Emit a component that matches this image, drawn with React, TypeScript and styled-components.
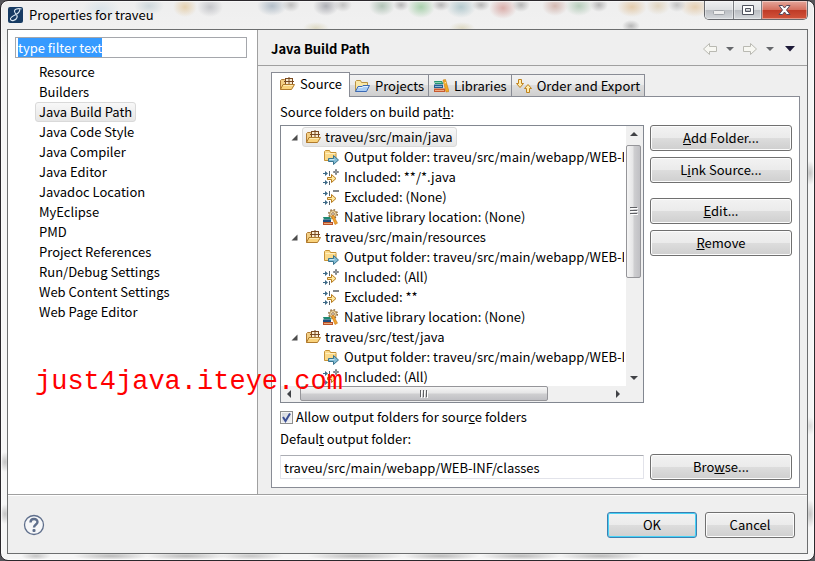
import React, { useEffect, useRef } from "react";
import styled, { createGlobalStyle, css } from "styled-components";

const GlobalStyle = createGlobalStyle`
  *, *::before, *::after { box-sizing: border-box; }
  body {
    margin: 0;
    background: #55555a;
    color: #000;
    font-family: "Noto Sans CJK SC", "Open Sans", sans-serif;
    font-size: 13px;
    line-height: 20px;
  }
  button, input { font: inherit; color: inherit; }
  ul { list-style: none; margin: 0; padding: 0; }
  svg { display: block; flex: none; }
`;

const smudge = (x: string, y: string, w: number, h: number, color: string) =>
  `radial-gradient(${w + 3}px ${h + 2}px at ${x} ${y}, color-mix(in srgb, ${color} 65%, transparent), transparent)`;

const glass = [
  smudge("100px", "8px", 16, 9, "#cfdde6"),
  smudge("148px", "5px", 12, 7, "#bccbd2"),
  smudge("184px", "6px", 9, 8, "#e0c08c"),
  smudge("209px", "6px", 10, 8, "#aeb0b6"),
  smudge("271px", "5px", 12, 8, "#92a4b4"),
  smudge("290px", "4px", 6, 5, "#a5a5a5"),
  smudge("325px", "5px", 10, 8, "#8b8d96"),
  smudge("342px", "4px", 6, 5, "#aaa"),
  smudge("381px", "5px", 10, 8, "#8fac98"),
  smudge("400px", "4px", 5, 4, "#999"),
  smudge("420px", "6px", 11, 9, "#83c189"),
  smudge("440px", "4px", 6, 4, "#999"),
  smudge("460px", "6px", 12, 9, "#94b6bd"),
  smudge("480px", "4px", 6, 4, "#999"),
  smudge("502px", "7px", 11, 9, "#cf8b85"),
  smudge("520px", "4px", 6, 5, "#999"),
  smudge("554px", "5px", 10, 8, "#c69b90"),
  smudge("578px", "5px", 11, 8, "#98bca0"),
  smudge("598px", "4px", 6, 5, "#999"),
  smudge("631px", "6px", 12, 8, "#ddb887"),
  smudge("657px", "5px", 9, 7, "#d9c6a4"),
  smudge("676px", "4px", 6, 5, "#aaa"),
  smudge("694px", "6px", 12, 8, "#e0bd90"),
  smudge("315px", "27px", 10, 4, "#d6cfae"),
  smudge("461px", "27px", 10, 4, "#d6cfae"),
  smudge("630px", "25px", 6, 4, "#999"),
  smudge("4px", "461px", 3, 8, "#aaa"),
  smudge("4px", "513px", 3, 8, "#aaa"),
  smudge("calc(100% - 4px)", "172px", 3, 10, "#aaa"),
  smudge("calc(100% - 4px)", "513px", 3, 12, "#aaa"),
  smudge("calc(100% - 4px)", "425px", 3, 7, "#ccc"),
  smudge("35px", "calc(100% - 4px)", 12, 2, "#aaa"),
  smudge("110px", "calc(100% - 4px)", 35, 2, "#999"),
  smudge("185px", "calc(100% - 4px)", 38, 2, "#999"),
  smudge("250px", "calc(100% - 4px)", 30, 2, "#aaa"),
  smudge("355px", "calc(100% - 4px)", 46, 2, "#999"),
  smudge("440px", "calc(100% - 4px)", 36, 2, "#999"),
  smudge("520px", "calc(100% - 4px)", 38, 2, "#999"),
  smudge("600px", "calc(100% - 4px)", 40, 2, "#999"),
].join(",");

const Frame = styled.div`
  position: relative;
  display: flex;
  flex-direction: column;
  min-height: 100vh;
  padding: 0 6px 6px;
  border: 1px solid #2b282c;
  border-radius: 8px;
  background: ${glass}, linear-gradient(#eee 0, #f1f1f1 28px, #f6f6f6 60px);
  box-shadow: inset 0 0 0 1px #ffffff99;
`;

const TitleBar = styled.header`
  display: flex;
  align-items: flex-start;
  height: 28px;
`;

const Caption = styled.div`
  display: flex;
  flex: 1;
  align-items: center;
  gap: 6px;
  height: 28px;
`;

const WindowButtons = styled.div`
  display: flex;
  border: 1px solid #66686d;
  border-top: 0;
  border-radius: 0 0 5px 5px;
  overflow: hidden;
`;

const WindowButton = styled.button<{ $close?: boolean }>`
  display: flex;
  align-items: center;
  justify-content: center;
  width: ${(p) => (p.$close ? 46 : 28)}px;
  height: 18px;
  padding: 0;
  border: 0;
  border-left: ${(p) => (p.$close ? "1px solid #6b3030" : "0")};
  background: ${(p) =>
    p.$close
      ? "linear-gradient(#e5a79b 0, #d5705f 48%, #bf3a26 50%, #d2543c 100%)"
      : "linear-gradient(#eff0f2 0, #dddfe2 48%, #b9bcc1 50%, #d5d8dc 100%)"};
  box-shadow: inset 0 0 0 1px #ffffff66;
  & + & { border-left: 1px solid #7c7e83; }
`;

const Client = styled.main`
  display: flex;
  flex: 1;
  flex-direction: column;
  border: 1px solid #6c6e6f;
  background: #efefef;
`;

const Body = styled.div`
  display: grid;
  flex: 1;
  grid-template-columns: 250px minmax(0, 1fr);
  border-bottom: 1px solid #a0a0a0;
`;

const Sidebar = styled.nav`
  padding: 7px 10px 7px 7px;
  border-right: 1px solid #a0a0a0;
  background: #fff;
`;

const FilterInput = styled.input`
  display: block;
  width: 100%;
  height: 21px;
  margin-bottom: 4px;
  padding: 0 2px;
  border: 1px solid #a5a7ac;
  outline: 0;
  background: #fff;
  line-height: 17px;
  &::selection { background: rgba(51, 153, 255, 0.99); color: #fff; }
`;

const highlight = css`
  border: 1px solid #d9d9d9;
  border-radius: 3px;
  background: linear-gradient(#f8f8f8, #e6e6e6);
`;

const PageLink = styled.a<{ $current?: boolean }>`
  display: block;
  width: fit-content;
  height: 20px;
  margin-left: 20px;
  padding: 0 3px;
  border: 1px solid transparent;
  color: #000;
  line-height: 18px;
  text-decoration: none;
  ${(p) => p.$current && highlight}
`;

const Content = styled.section`
  display: flex;
  flex-direction: column;
  min-width: 0;
`;

const PageHeader = styled.div`
  display: flex;
  align-items: center;
  justify-content: space-between;
  height: 36px;
  padding: 2px 9px 0 13px;
  border-bottom: 1px solid #a0a0a0;
`;

const PageTitle = styled.h1`
  margin: 0;
  font-size: 13px;
  line-height: 20px;
`;

const HistoryTools = styled.div`
  display: flex;
  align-items: center;
`;

const ToolButton = styled.button<{ $width: number }>`
  display: flex;
  align-items: center;
  justify-content: center;
  width: ${(p) => p.$width}px;
  height: 20px;
  padding: 0;
  border: 0;
  background: none;
`;

const TabArea = styled.div`
  display: flex;
  flex: 1;
  flex-direction: column;
  padding: 6px 7px 6px 13px;
`;

const TabList = styled.div`
  display: flex;
  align-items: flex-end;
  height: 24px;
`;

const Tab = styled.button<{ $active?: boolean }>`
  display: flex;
  align-items: center;
  gap: 5px;
  height: 22px;
  padding: 0 4px;
  border: 1px solid #898c95;
  border-bottom: 0;
  background: linear-gradient(#f2f2f2 0, #ebebeb 48%, #dddddd 50%, #cfcfcf 100%);
  white-space: nowrap;
  & + & { border-left: 0; }
  ${(p) =>
    p.$active &&
    css`
      z-index: 1;
      height: 25px;
      margin-bottom: -1px;
      padding: 0 7px 2px;
      background: #fff;
    `}
`;

const Panel = styled.div`
  display: flex;
  flex: 1;
  flex-direction: column;
  padding: 5px 7px 7px 8px;
  border: 1px solid #898c95;
  background: #fff;
`;

const Columns = styled.div`
  display: grid;
  grid-template-columns: minmax(0, 1fr) 142px;
  column-gap: 6px;
`;

const FieldLabel = styled.label`
  display: block;
  height: 20px;
`;

const TreeHeading = styled.div`
  height: 23px;
`;

const TreeBox = styled.div`
  display: grid;
  grid-template-columns: minmax(0, 1fr) 17px;
  grid-template-rows: 260px 16px;
  border: 1px solid #828790;
  background: #fff;
`;

const TreeView = styled.ul`
  overflow: hidden;
  margin-right: 2px;
  padding-top: 1px;
`;

const TreeRow = styled.div<{ $child?: boolean }>`
  display: flex;
  align-items: center;
  height: 20px;
  padding-left: ${(p) => (p.$child ? 42 : 9)}px;
  gap: ${(p) => (p.$child ? 5 : 4)}px;
  line-height: 18px;
  white-space: nowrap;
`;

const TreeLabel = styled.span<{ $selected?: boolean }>`
  display: flex;
  align-items: center;
  gap: 4px;
  height: 20px;
  padding: 0 3px 0 2px;
  border: 1px solid transparent;
  line-height: 18px;
  ${(p) => p.$selected && highlight}
`;

const Twisty = styled.button`
  display: flex;
  align-items: center;
  justify-content: center;
  width: 8px;
  height: 16px;
  padding: 0;
  border: 0;
  background: none;
`;

const ScrollTrack = styled.div<{ $horizontal?: boolean }>`
  display: flex;
  flex-direction: ${(p) => (p.$horizontal ? "row" : "column")};
  background: #f0f0f0;
`;

const ScrollArrow = styled.button`
  display: flex;
  align-items: center;
  justify-content: center;
  flex: none;
  width: 16px;
  height: 16px;
  padding: 0;
  border: 0;
  background: none;
`;

const ScrollRail = styled.div<{ $horizontal?: boolean }>`
  display: flex;
  flex: 1;
  flex-direction: ${(p) => (p.$horizontal ? "row" : "column")};
  padding: ${(p) => (p.$horizontal ? "0 0 1px 3px" : "3px 2px 0 0")};
`;

const ScrollThumb = styled.div<{ $horizontal?: boolean }>`
  display: flex;
  align-items: center;
  justify-content: center;
  flex: 0 0 ${(p) => (p.$horizontal ? "80%" : "59%")};
  border: 1px solid #959599;
  border-radius: 2px;
  background: linear-gradient(
    ${(p) => (p.$horizontal ? "180deg" : "90deg")},
    #f5f5f5 0, #e5e5e6 48%, #cfcfd1 52%, #c0c0c4 100%
  );
`;

const ButtonStack = styled.div`
  display: flex;
  flex-direction: column;
  gap: 6px;
`;

const PushButton = styled.button<{ $default?: boolean; $spaced?: boolean; $width?: number }>`
  width: ${(p) => (p.$width ? `${p.$width}px` : "100%")};
  height: 26px;
  margin-top: ${(p) => (p.$spaced ? 9 : 0)}px;
  padding: 0 8px;
  border: 1px solid ${(p) => (p.$default ? "#3c7fb1" : "#707070")};
  border-radius: 3px;
  background: linear-gradient(#f2f2f2 0, #ebebeb 48%, #dddddd 50%, #cfcfcf 100%);
  box-shadow: inset 0 0 0 1px ${(p) => (p.$default ? "#46d2f6" : "#fcfcfc")};
  line-height: 20px;
`;

const CheckRow = styled.label`
  display: flex;
  align-items: center;
  gap: 3px;
  height: 20px;
  margin-top: 4px;
`;

const CheckControl = styled.span`
  display: grid;
  width: 13px;
  height: 13px;
  & > * { grid-area: 1 / 1; }
  svg { pointer-events: none; z-index: 1; }
`;

const CheckBox = styled.input`
  appearance: none;
  width: 13px;
  height: 13px;
  margin: 0;
  border: 1px solid #8e8f8f;
  background: linear-gradient(135deg, #cfd3d9, #f5f6f7);
  box-shadow: inset 0 0 0 1px #f4f4f4;
`;

const OutputLabel = styled(FieldLabel)`
  margin: 2px 0 5px;
`;

const PathInput = styled.input`
  width: 100%;
  height: 24px;
  margin-top: 1px;
  padding: 0 3px;
  border: 1px solid #e2e3ea;
  border-top-color: #abadb3;
  border-radius: 1px;
  outline: 0;
  background: #fff;
`;

const Footer = styled.footer`
  display: flex;
  align-items: center;
  gap: 8px;
  height: 58px;
  padding: 0 12px 0 15px;
  border-top: 1px solid #fff;
`;

const HelpButton = styled.button`
  display: flex;
  margin-right: auto;
  padding: 0;
  border: 0;
  background: none;
`;

const Watermark = styled.div`
  position: absolute;
  top: 366px;
  left: 34px;
  color: #f00;
  font-family: "Liberation Mono", monospace;
  font-size: 27px;
  line-height: 30px;
  pointer-events: none;
`;

const PackageFolderIcon = () => (
  <svg width="16" height="16" viewBox="0 0 16 16" aria-hidden="true">
    <path d="M1.500 13.500v-9l1-1h3l1 1h7v5" fill="#f3cf86" stroke="#b07a34" />
    <rect x="6.500" y="2.500" width="7" height="6" fill="#f9ecd2" stroke="#7a4a21" />
    <path d="M10 1v8M5 5.500h10" stroke="#7a4a21" />
    <path d="M1.500 13.500L4 8.500h11.500l-3 5z" fill="#f9d27c" stroke="#b07a2c" />
    <path d="M4.500 9.500h9.500" stroke="#fdeab5" />
  </svg>
);

const ProjectsIcon = () => (
  <svg width="16" height="16" viewBox="0 0 16 16" aria-hidden="true">
    <path d="M1.500 13.500V3.500l1-1h4l1 2h6v4" fill="#f9e7a8" stroke="#b99242" />
    <path d="M1.500 13.500L4 8.500h4l1-1h6.500l-3 6z" fill="#a9cdf5" stroke="#3b69b5" />
    <path d="M4.500 9.500h4l1-1h4.500" fill="none" stroke="#e0f0ff" />
  </svg>
);

const LibrariesIcon = () => (
  <svg width="16" height="16" viewBox="0 0 16 16" aria-hidden="true">
    <path d="M10 2l2.500-.5 3.500 12-3 .5z" fill="#f3a922" stroke="#c77d16" strokeWidth=".6" />
    <path d="M11.500 5l1.500-.4" stroke="#fff2bd" />
    <path d="M1 3h8l1.500 3H2z" fill="#259572" />
    <path d="M2 4.500h6.500" stroke="#8fd0b6" />
    <path d="M1 6.500h9v3.500H1z" fill="#235f93" />
    <path d="M2 8.500h7" stroke="#8db7d8" />
    <path d="M1 10.500h11V14H1z" fill="#c9582f" />
    <path d="M2 12.500h9" stroke="#f0ac84" />
  </svg>
);

const OrderIcon = () => (
  <svg width="16" height="16" viewBox="0 0 16 16" aria-hidden="true">
    <path d="M2.500 1.500h3v4h2L4 9.500.5 5.500h2z" fill="#ffedb0" stroke="#c0821c" />
    <path d="M10.500 14.500h3v-4h2L12 6.500l-3.500 4h2z" fill="#ffedb0" stroke="#c0821c" />
  </svg>
);

const OutputFolderIcon = () => (
  <svg width="16" height="16" viewBox="0 0 16 16" aria-hidden="true">
    <path d="M1.500 11.500v-9l1-1h4l1 2h5.500v8z" fill="#fbd98a" stroke="#c69236" />
    <path d="M2.500 4.500h10" stroke="#fff0c0" />
    <path d="M5.500 9.500h5v-3l5 4.500-5 4.500v-3h-5z" fill="#83bcd5" stroke="#39758f" />
    <path d="M6.500 10.500h5" stroke="#c4e6ef" />
  </svg>
);

const FilterIcon = ({ plus }: { plus?: boolean }) => (
  <svg width="16" height="16" viewBox="0 0 16 16" aria-hidden="true">
    <path d="M0 4.500h4M0 13.500h4" stroke="#3d6a88" />
    <path d="M2 2l3 2.500L2 7zM2 11l3 2.500L2 16z" fill="#3d6a88" />
    <path d="M6.500 2v5M6.500 12v4" stroke="#56646d" />
    <path d="M4.500 8.500h4v-3l4.500 4-4.500 4v-3h-4z" fill="#ffe9a0" stroke="#b87c1f" />
    {plus ? (
      <path d="M12.500.5h1v2h2v1h-2v2h-1v-2h-2v-1h2z" fill="#c6c8ca" stroke="#81868a" />
    ) : (
      <rect x="10.500" y="1.500" width="5" height="1" fill="#c6c8ca" stroke="#81868a" />
    )}
  </svg>
);

const NativeIcon = () => (
  <svg width="16" height="16" viewBox="0 0 16 16" aria-hidden="true">
    <circle cx="10" cy="5" r="4.200" fill="none" stroke="#8f6a3a" strokeWidth="1.600" strokeDasharray="1.650 1.650" />
    <circle cx="10" cy="5" r="3.400" fill="#f6deac" stroke="#a57c45" strokeWidth=".8" />
    <circle cx="10" cy="5" r="1.300" fill="#fff" stroke="#7e5b35" strokeWidth=".8" />
    <path d="M0 8h7l1.500 2.500H1z" fill="#1f8a72" />
    <path d="M0 10.500h8V13H0z" fill="#1f4f80" />
    <path d="M0 13h10v3H0z" fill="#bb5129" />
    <path d="M1 14.500h8" stroke="#eaa878" />
    <path d="M8.500 7l2-.8 4 8-2.500 1.300z" fill="#f2a52d" stroke="#c87519" strokeWidth=".6" />
  </svg>
);

const Arrow = ({ dir, color = "#404246" }: { dir: "up" | "down" | "left" | "right"; color?: string }) => {
  const d = {
    up: "M0 6L4 2l4 4z",
    down: "M0 2h8L4 6z",
    left: "M6 0L2 4l4 4z",
    right: "M2 0l4 4-4 4z",
  }[dir];
  return (
    <svg width="8" height="8" viewBox="0 0 8 8" aria-hidden="true">
      <path d={d} fill={color} />
    </svg>
  );
};

const HistoryArrow = ({ forward }: { forward?: boolean }) => (
  <svg width="16" height="14" viewBox="0 0 16 14" aria-hidden="true">
    <path
      d={forward ? "M1.500 4.500h7v-3l6 5.500-6 5.500v-3h-7z" : "M14.500 4.500h-7v-3l-6 5.500 6 5.500v-3h7z"}
      fill="#f7f7f2"
      stroke="#b9b9b2"
      strokeLinejoin="round"
    />
  </svg>
);

const Grip = ({ vertical }: { vertical?: boolean }) => (
  <svg width="8" height="8" viewBox="0 0 8 8" aria-hidden="true">
    <path d={vertical ? "M0 .5h7M0 3.500h7M0 6.500h7" : "M.5 0v7M3.500 0v7M6.500 0v7"} stroke="#5f6064" />
    <path d={vertical ? "M1 1.500h7M1 4.500h7M1 7.500h7" : "M1.500 1v7M4.500 1v7M7.500 1v7"} stroke="#fff" />
  </svg>
);

type Entry = { kind: "output" | "included" | "excluded" | "native"; text: string };
type SourceFolder = { path: string; selected?: boolean; entries: Entry[] };

const output = "Output folder: traveu/src/main/webapp/WEB-INF/classes";
const folders: SourceFolder[] = [
  {
    path: "traveu/src/main/java",
    selected: true,
    entries: [
      { kind: "output", text: output },
      { kind: "included", text: "Included: **/*.java" },
      { kind: "excluded", text: "Excluded: (None)" },
      { kind: "native", text: "Native library location: (None)" },
    ],
  },
  {
    path: "traveu/src/main/resources",
    entries: [
      { kind: "output", text: output },
      { kind: "included", text: "Included: (All)" },
      { kind: "excluded", text: "Excluded: **" },
      { kind: "native", text: "Native library location: (None)" },
    ],
  },
  {
    path: "traveu/src/test/java",
    entries: [
      { kind: "output", text: output },
      { kind: "included", text: "Included: (All)" },
    ],
  },
];

const entryIcons = {
  output: <OutputFolderIcon />,
  included: <FilterIcon plus />,
  excluded: <FilterIcon />,
  native: <NativeIcon />,
};

const pages = [
  "Resource",
  "Builders",
  "Java Build Path",
  "Java Code Style",
  "Java Compiler",
  "Java Editor",
  "Javadoc Location",
  "MyEclipse",
  "PMD",
  "Project References",
  "Run/Debug Settings",
  "Web Content Settings",
  "Web Page Editor",
];

export default function App() {
  const filter = useRef<HTMLInputElement>(null);
  useEffect(() => {
    filter.current?.focus();
    filter.current?.select();
  }, []);

  return (
    <>
      <GlobalStyle />
      <Frame>
        <TitleBar>
          <Caption>
            <svg width="16" height="16" viewBox="0 0 16 16" aria-hidden="true">
              <rect x="1" width="15" height="16" rx="2" fill="#173b63" />
              <path
                d="M14.500 2C11 1 7 2 7.500 4.500s3.500 3 2.500 6S4.500 14.500 3.500 12.500 7 8.500 9 7.500 13.500 4 12.500 2.500"
                fill="none"
                stroke="#dce8f2"
                strokeWidth="1.100"
              />
            </svg>
            <span>Properties for traveu</span>
          </Caption>
          <WindowButtons>
            <WindowButton aria-label="Minimize">
              <svg width="14" height="12" viewBox="0 0 14 12">
                <rect x="1.500" y="6.500" width="11" height="4" rx="1" fill="#eee" stroke="#a0a3a8" />
              </svg>
            </WindowButton>
            <WindowButton aria-label="Maximize">
              <svg width="12" height="12" viewBox="0 0 12 12">
                <path d="M.5 1.500h11v9H.5zM3.500 4.500v3h5v-3z" fill="#fff" fillRule="evenodd" stroke="#50535e" />
              </svg>
            </WindowButton>
            <WindowButton aria-label="Close" $close>
              <svg width="13" height="12" viewBox="0 0 13 12">
                <path
                  d="M1 1.500h3.500l2 2.500 2-2.500H12L8.500 6l3.500 4.500H8.500l-2-2.500-2 2.500H1L4.500 6z"
                  fill="#fff"
                  stroke="#56485a"
                />
              </svg>
            </WindowButton>
          </WindowButtons>
        </TitleBar>

        <Client>
          <Body>
            <Sidebar aria-label="Property pages">
              <FilterInput ref={filter} aria-label="Filter" defaultValue="type filter text" />
              <ul>
                {pages.map((page) => (
                  <li key={page}>
                    <PageLink
                      href="#"
                      $current={page === "Java Build Path"}
                      aria-current={page === "Java Build Path" ? "page" : undefined}
                    >
                      {page}
                    </PageLink>
                  </li>
                ))}
              </ul>
            </Sidebar>

            <Content>
              <PageHeader>
                <PageTitle>Java Build Path</PageTitle>
                <HistoryTools>
                  <ToolButton $width={16} aria-label="Back"><HistoryArrow /></ToolButton>
                  <ToolButton $width={24} aria-label="Back history"><Arrow dir="down" color="#66686c" /></ToolButton>
                  <ToolButton $width={16} aria-label="Forward"><HistoryArrow forward /></ToolButton>
                  <ToolButton $width={24} aria-label="Forward history"><Arrow dir="down" color="#66686c" /></ToolButton>
                  <ToolButton $width={16} aria-label="Menu">
                    <svg width="10" height="6" viewBox="0 0 10 6"><path d="M0 0h10L5 5.500z" fill="#1d1a38" /></svg>
                  </ToolButton>
                </HistoryTools>
              </PageHeader>

              <TabArea>
                <TabList role="tablist">
                  <Tab role="tab" aria-selected $active><PackageFolderIcon />Source</Tab>
                  <Tab role="tab" aria-selected={false}><ProjectsIcon />Projects</Tab>
                  <Tab role="tab" aria-selected={false}><LibrariesIcon />Libraries</Tab>
                  <Tab role="tab" aria-selected={false}><OrderIcon />Order and Export</Tab>
                </TabList>
                <Panel role="tabpanel">
                  <TreeHeading id="tree-heading">Source folders on build pat<u>h</u>:</TreeHeading>
                  <Columns>
                    <TreeBox>
                      <TreeView role="tree" aria-labelledby="tree-heading">
                        {folders.map((folder) => (
                          <li key={folder.path} role="treeitem" aria-expanded aria-selected={!!folder.selected}>
                            <TreeRow>
                              <Twisty aria-label="Collapse">
                                <svg width="7" height="7" viewBox="0 0 7 7"><path d="M6.500.5v6h-6z" fill="#4c4c4c" /></svg>
                              </Twisty>
                              <TreeLabel $selected={folder.selected}>
                                <PackageFolderIcon />
                                {folder.path}
                              </TreeLabel>
                            </TreeRow>
                            <ul role="group">
                              {folder.entries.map((entry) => (
                                <li key={entry.kind} role="treeitem">
                                  <TreeRow $child>
                                    {entryIcons[entry.kind]}
                                    <span>{entry.text}</span>
                                  </TreeRow>
                                </li>
                              ))}
                            </ul>
                          </li>
                        ))}
                      </TreeView>
                      <ScrollTrack>
                        <ScrollArrow aria-label="Scroll up"><Arrow dir="up" /></ScrollArrow>
                        <ScrollRail><ScrollThumb><Grip vertical /></ScrollThumb></ScrollRail>
                        <ScrollArrow aria-label="Scroll down"><Arrow dir="down" /></ScrollArrow>
                      </ScrollTrack>
                      <ScrollTrack $horizontal>
                        <ScrollArrow aria-label="Scroll left"><Arrow dir="left" /></ScrollArrow>
                        <ScrollRail $horizontal><ScrollThumb $horizontal><Grip /></ScrollThumb></ScrollRail>
                        <ScrollArrow aria-label="Scroll right"><Arrow dir="right" /></ScrollArrow>
                      </ScrollTrack>
                      <ScrollTrack />
                    </TreeBox>
                    <ButtonStack>
                      <PushButton><u>A</u>dd Folder...</PushButton>
                      <PushButton>L<u>i</u>nk Source...</PushButton>
                      <PushButton $spaced><u>E</u>dit...</PushButton>
                      <PushButton><u>R</u>emove</PushButton>
                    </ButtonStack>
                  </Columns>
                  <CheckRow>
                    <CheckControl>
                      <CheckBox type="checkbox" defaultChecked />
                      <svg width="13" height="13" viewBox="0 0 13 13" aria-hidden="true">
                        <path d="M3 6l2.500 4L10 2.500" fill="none" stroke="#3b4f94" strokeWidth="2" />
                      </svg>
                    </CheckControl>
                    <span>Allow output folders for sour<u>c</u>e folders</span>
                  </CheckRow>
                  <OutputLabel htmlFor="output-folder">Defaul<u>t</u> output folder:</OutputLabel>
                  <Columns>
                    <PathInput id="output-folder" defaultValue="traveu/src/main/webapp/WEB-INF/classes" />
                    <PushButton>Bro<u>w</u>se...</PushButton>
                  </Columns>
                </Panel>
              </TabArea>
            </Content>
          </Body>

          <Footer>
            <HelpButton aria-label="Help">
              <svg width="22" height="22" viewBox="0 0 22 22" aria-hidden="true">
                <circle cx="11" cy="11" r="9.500" fill="#f6f7f9" stroke="#5f6f8c" strokeWidth="1.300" />
                <path d="M7.500 8.500C7.500 4 14.500 4 14.500 8c0 2.500-3.500 2.500-3.500 5.500" fill="none" stroke="#5f6f8c" strokeWidth="2.400" />
                <rect x="9.500" y="15" width="3" height="3" rx="1" fill="#5f6f8c" />
              </svg>
            </HelpButton>
            <PushButton $default $width={90}>OK</PushButton>
            <PushButton $width={90}>Cancel</PushButton>
          </Footer>
        </Client>
        <Watermark>just4java.iteye.com</Watermark>
      </Frame>
    </>
  );
}
